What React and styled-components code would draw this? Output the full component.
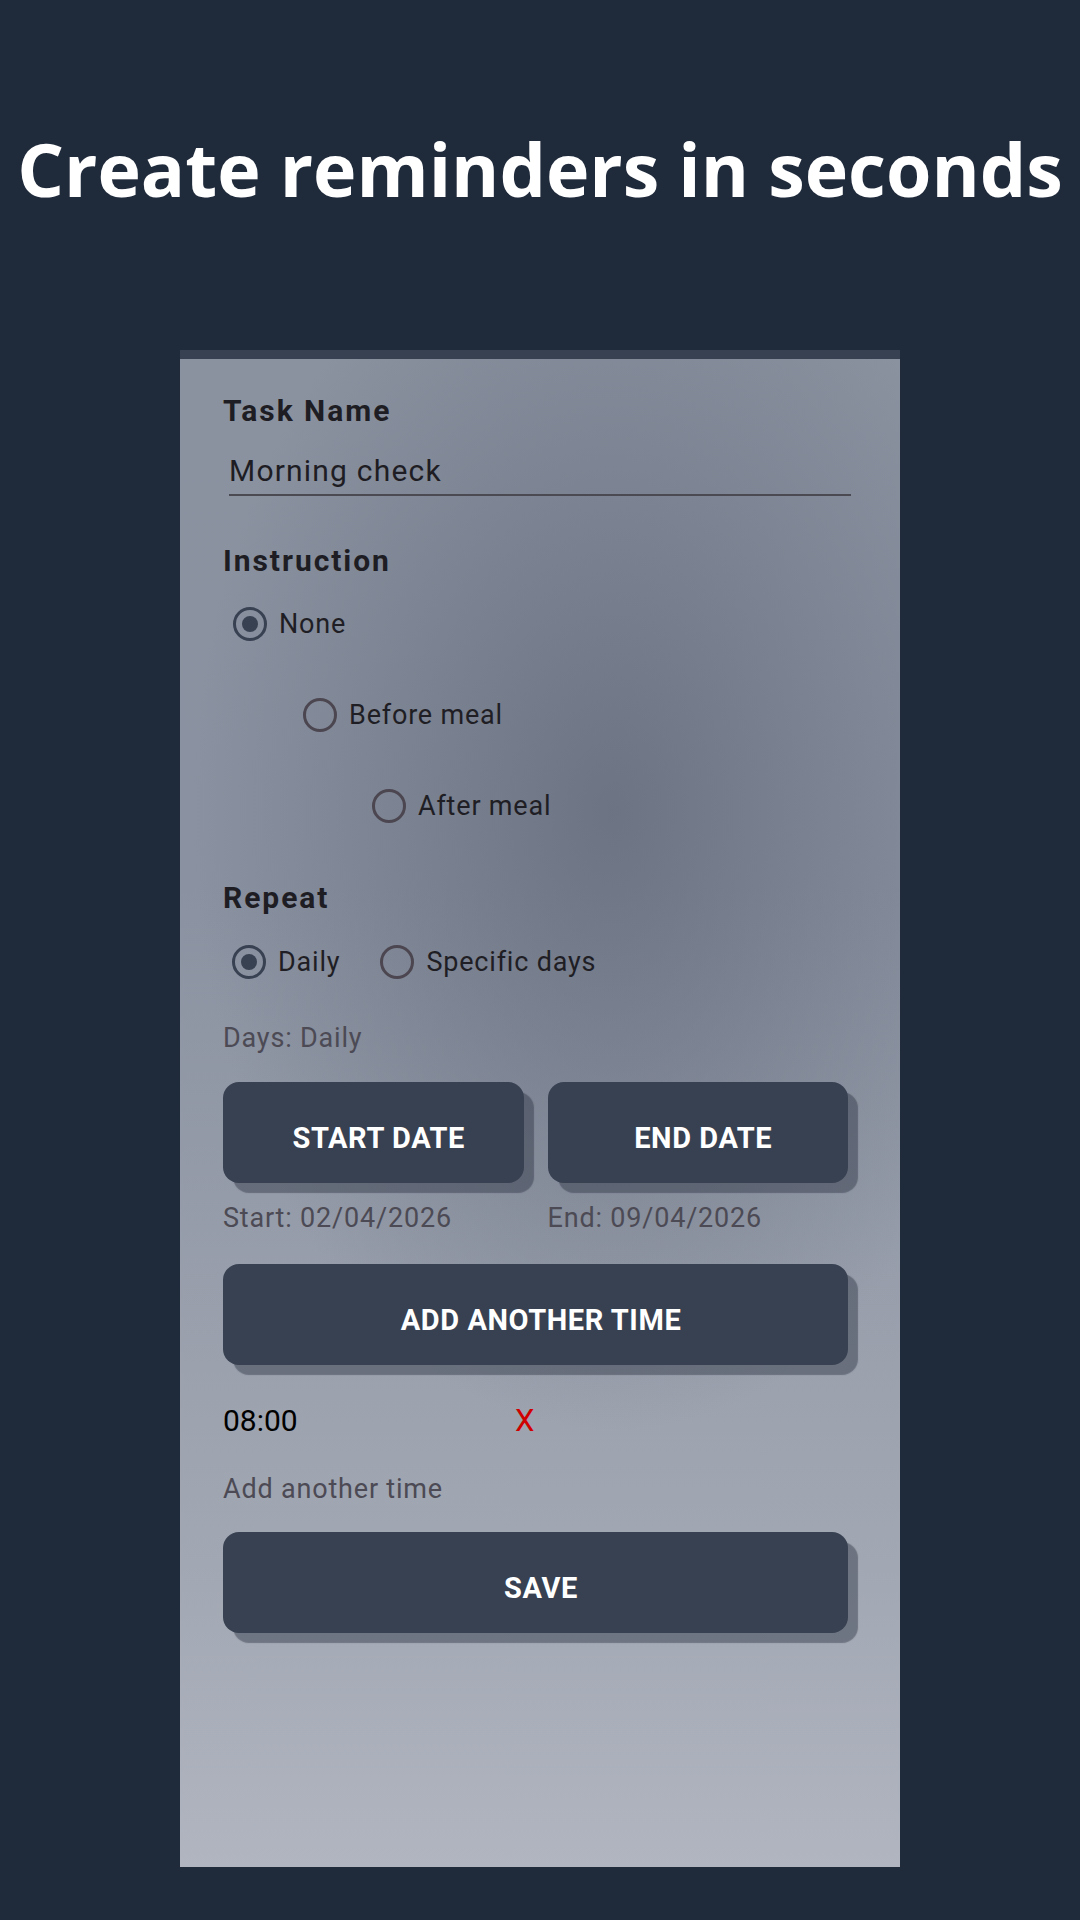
import styled, { createGlobalStyle } from 'styled-components';

const GlobalStyle = createGlobalStyle`
	html, body {
		margin: 0;
		padding: 0;
		background: #1f2a3b;
	}
	* {
		box-sizing: border-box;
	}
`;

const Page = styled.div`
	width: 1080px;
	height: 1920px;
	background: #1f2a3b;
	display: flex;
	flex-direction: column;
	align-items: center;
`;

const Header = styled.div`
	height: 350px;
	width: 100%;
	padding-top: 132px;
`;

const Title = styled.h1`
	margin: 0;
	text-align: center;
	font-family: 'Open Sans', 'Noto Sans', sans-serif;
	font-weight: 700;
	font-size: 73.5px;
	line-height: 73px;
	color: #fff;
	white-space: nowrap;
`;

const Screen = styled.div`
	width: 720px;
	height: 1517px;
	border-top: 9px solid #374151;
	background:
		radial-gradient(ellipse 420px 620px at 60% 30%, rgba(105, 112, 128, 0.9) 0%, rgba(105, 112, 128, 0) 100%),
		linear-gradient(180deg, #8a92a0 0%, #8a91a0 35%, #a2a8b3 80%, #b0b5c0 100%);
	padding: 34px 52px 0 43px;
	display: flex;
	flex-direction: column;
	font-family: Roboto, 'Liberation Sans', sans-serif;
`;

const Label = styled.div`
	font-size: 30px;
	font-weight: 700;
	line-height: 36px;
	letter-spacing: 0.065em;
	color: #1e1d23;
	margin-top: ${(p) => p.$top || 0}px;
`;

const NameInput = styled.div`
	margin: 24px 0 0 6px;
	width: 622px;
	font-size: 30px;
	line-height: 36px;
	letter-spacing: 0.04em;
	color: #1e1d23;
	padding-bottom: 5px;
	border-bottom: 2px solid #4b4952;
`;

const RadioRow = styled.label`
	display: flex;
	align-items: center;
	height: 34px;
	margin-top: ${(p) => p.$top}px;
	margin-left: ${(p) => p.$indent}px;
`;

const RadioGroupRow = styled.div`
	display: flex;
	align-items: center;
	height: 34px;
	margin-top: 29px;
	margin-left: 9px;
	gap: 40px;
`;

const RadioOption = styled.span`
	display: flex;
	align-items: center;
`;

const Circle = styled.span`
	width: 34px;
	height: 34px;
	border-radius: 50%;
	border: 3px solid ${(p) => (p.$checked ? '#374151' : '#4b4650')};
	display: flex;
	align-items: center;
	justify-content: center;
	flex-shrink: 0;
	&::after {
		content: '';
		width: 16px;
		height: 16px;
		border-radius: 50%;
		background: #374151;
		display: ${(p) => (p.$checked ? 'block' : 'none')};
	}
`;

const RadioText = styled.span`
	margin-left: 12px;
	font-size: 27px;
	line-height: 34px;
	letter-spacing: 0.03em;
	color: #1f1e24;
`;

const Muted = styled.div`
	font-size: 27px;
	line-height: 34px;
	letter-spacing: 0.03em;
	color: #4c4a54;
	margin-top: ${(p) => p.$top}px;
`;

const DateGrid = styled.div`
	display: grid;
	grid-template-columns: 1fr 1fr;
	column-gap: 24px;
	margin-top: 27px;
`;

const DateCell = styled.div`
	display: flex;
	flex-direction: column;
`;

const Button = styled.button`
	width: 100%;
	height: 101px;
	border: none;
	border-radius: 16px;
	background: #374151;
	box-shadow: 10px 10px 1px rgba(45, 52, 66, 0.45);
	padding: 10px 0 0 11px;
	color: #fff;
	font-family: Roboto, 'Liberation Sans', sans-serif;
	font-size: 29px;
	font-weight: 700;
	letter-spacing: 0.02em;
	text-transform: uppercase;
	margin-top: ${(p) => p.$top || 0}px;
`;

const DateText = styled.div`
	font-size: 27px;
	line-height: 34px;
	letter-spacing: 0.03em;
	color: #4c4a54;
	margin-top: 18px;
`;

const TimeRow = styled.div`
	display: flex;
	align-items: center;
	margin-top: 37px;
	height: 38px;
`;

const TimeText = styled.span`
	width: 292px;
	font-size: 30px;
	line-height: 38px;
	color: #000;
`;

const RemoveTime = styled.span`
	font-size: 31px;
	line-height: 38px;
	color: #d00000;
`;

const instructions = [
	{ text: 'None', indent: 10, top: 28, checked: true },
	{ text: 'Before meal', indent: 80, top: 57 },
	{ text: 'After meal', indent: 149, top: 57 }
];

const App = () => {
	return (
		<Page>
			<GlobalStyle />
			<Header>
				<Title>Create reminders in seconds</Title>
			</Header>
			<Screen>
				<Label>Task Name</Label>
				<NameInput>Morning check</NameInput>

				<Label $top={47}>Instruction</Label>
				{instructions.map((item) => (
					<RadioRow key={item.text} $indent={item.indent} $top={item.top}>
						<Circle $checked={item.checked} />
						<RadioText>{item.text}</RadioText>
					</RadioRow>
				))}

				<Label $top={57}>Repeat</Label>
				<RadioGroupRow>
					<RadioOption>
						<Circle $checked />
						<RadioText>Daily</RadioText>
					</RadioOption>
					<RadioOption>
						<Circle />
						<RadioText>Specific days</RadioText>
					</RadioOption>
				</RadioGroupRow>

				<Muted $top={42}>Days: Daily</Muted>

				<DateGrid>
					<DateCell>
						<Button>Start Date</Button>
						<DateText>Start: 02/04/2026</DateText>
					</DateCell>
					<DateCell>
						<Button>End Date</Button>
						<DateText>End: 09/04/2026</DateText>
					</DateCell>
				</DateGrid>

				<Button $top={29}>Add another time</Button>

				<TimeRow>
					<TimeText>08:00</TimeText>
					<RemoveTime>X</RemoveTime>
				</TimeRow>

				<Muted $top={32}>Add another time</Muted>

				<Button $top={26}>Save</Button>
			</Screen>
		</Page>
	);
};

export default App;
